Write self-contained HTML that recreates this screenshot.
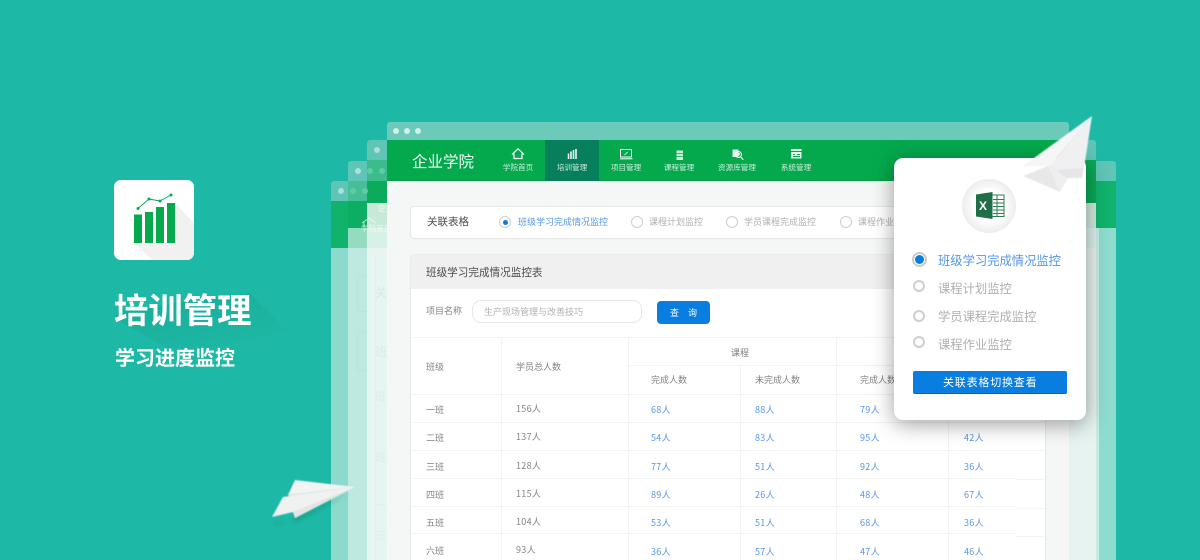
<!DOCTYPE html>
<html lang="zh-CN">
<head>
<meta charset="utf-8">
<title>培训管理</title>
<style>
html,body{margin:0;padding:0}
body{width:1200px;height:560px;overflow:hidden;background:#1eb9a6;position:relative;font-family:"Liberation Sans","Noto Sans CJK SC",sans-serif}
body,.t{font-family:"Noto Sans CJK SC","Liberation Sans",sans-serif}
.r{position:absolute}
.t{position:absolute;white-space:nowrap;line-height:12px;font-size:9px;color:#828282}
.b{color:#5596e6;letter-spacing:.3px}
.g{letter-spacing:.3px}
.nav{color:#cfeedb;font-size:7.6px;transform:translateX(-50%);top:162px}
#main{position:absolute;left:0;top:0;width:1200px;height:560px;filter:blur(.35px)}
.line{position:absolute;background:#f2f3f3;height:1px}
.vl{position:absolute;background:#f2f3f3;width:1px}
.rad{position:absolute;box-sizing:border-box;border-radius:50%;background:#fff}
</style>
</head>
<body>

<!-- left colored columns of the stacked windows -->
<div class="r" style="left:331px;top:181px;width:17px;height:20px;background:#5fc5b6;border-radius:3px 0 0 0"></div>
<div class="r" style="left:331px;top:201px;width:17px;height:47px;background:#10b26c"></div>
<div class="r" style="left:331px;top:248px;width:17px;height:312px;background:#8bdacd"></div>

<div class="r" style="left:348px;top:161px;width:19px;height:20px;background:#5fc5b6;border-radius:3px 0 0 0"></div>
<div class="r" style="left:348px;top:181px;width:19px;height:20px;background:#45bf98"></div>
<div class="r" style="left:348px;top:201px;width:19px;height:27px;background:#0bae62"></div>
<div class="r" style="left:348px;top:228px;width:19px;height:20px;background:#93dcc2"></div>
<div class="r" style="left:348px;top:248px;width:19px;height:312px;background:#bde9e1"></div>

<div class="r" style="left:367px;top:140px;width:20px;height:20px;background:#5fc5b6;border-radius:3px 0 0 0"></div>
<div class="r" style="left:367px;top:160px;width:20px;height:21px;background:#3cbb8d"></div>
<div class="r" style="left:367px;top:181px;width:20px;height:22px;background:#0aac5b"></div>
<div class="r" style="left:367px;top:203px;width:20px;height:25px;background:#c8e9d8"></div>
<div class="r" style="left:367px;top:228px;width:20px;height:20px;background:#d7f0e8"></div>
<div class="r" style="left:367px;top:248px;width:20px;height:312px;background:#e6f5f2"></div>

<svg class="r" style="left:331px;top:140px" width="56" height="70">
<g fill="#a8e2d8"><circle cx="10" cy="51" r="3"/><circle cx="27" cy="31" r="3"/><circle cx="46" cy="10" r="3"/></g>
<g fill="#5fcba5"><circle cx="22" cy="51" r="3"/><circle cx="34" cy="51" r="3"/><circle cx="39" cy="31" r="3"/><circle cx="51" cy="31" r="3"/></g>
</svg>
<svg class="r" style="left:360px;top:216px" width="24" height="14" fill="none" stroke="#fff" stroke-width="1" opacity=".7"><path d="M2 7L9 2L16 7M4 6V11"/></svg>
<div class="t" style="left:378px;top:203px;color:#fff;font-size:8px;opacity:.8">企业</div>
<div class="t" style="left:361px;top:223px;color:#fff;font-size:7.6px;opacity:.7">学院首页</div>
<div class="t" style="left:375px;top:287px;font-size:12px;color:#dce6e3">关联</div>
<div class="t" style="left:375px;top:346px;font-size:12px;color:#dfe8e5">班级</div>
<div class="t" style="left:375px;top:390px;font-size:11px;color:#e1eae7">班</div>
<div class="t" style="left:375px;top:451px;font-size:11px;color:#e1eae7">班</div>
<div class="t" style="left:375px;top:499px;font-size:11px;color:#e1eae7">一</div>
<div class="t" style="left:375px;top:529px;font-size:11px;color:#e1eae7">三</div>
<div class="r" style="left:357px;top:275px;width:10px;height:37px;border:1px solid #b6e5dc;border-right:0;box-sizing:border-box"></div>
<div class="r" style="left:357px;top:331px;width:10px;height:40px;border:1px solid #b6e5dc;border-right:0;box-sizing:border-box"></div>
<div class="r" style="left:375px;top:255px;width:12px;height:305px;border-left:1px solid #e1f1ed;box-sizing:border-box"></div>

<!-- right colored columns -->
<div class="r" style="left:1069px;top:140px;width:27px;height:20px;background:#5fc5b6;border-radius:0 3px 0 0"></div>
<div class="r" style="left:1069px;top:160px;width:27px;height:43px;background:#0aa856"></div>
<div class="r" style="left:1069px;top:203px;width:27px;height:25px;background:#cfe9dd"></div>
<div class="r" style="left:1069px;top:228px;width:27px;height:20px;background:#dcf0eb"></div>
<div class="r" style="left:1069px;top:248px;width:27px;height:312px;background:#e6f3f1"></div>
<div class="r" style="left:1096px;top:161px;width:20px;height:20px;background:#5fc5b6;border-radius:0 3px 0 0"></div>
<div class="r" style="left:1096px;top:181px;width:20px;height:47px;background:#10b26c"></div>
<div class="r" style="left:1096px;top:228px;width:20px;height:332px;background:#8fdbce"></div>
<div class="r" style="left:1096px;top:228px;width:3px;height:332px;background:#c5ebe3"></div>

<!-- main window -->
<div id="main">
<div class="r" style="left:387px;top:122px;width:682px;height:18px;background:#6bcaba;border-radius:3px 3px 0 0"></div>
<svg class="r" style="left:387px;top:122px" width="50" height="18"><g fill="#d2efe9"><circle cx="9" cy="9" r="3"/><circle cx="20" cy="9" r="3"/><circle cx="31" cy="9" r="3"/></g></svg>
<div class="r" style="left:387px;top:140px;width:682px;height:41px;background:#04a94d;border-bottom:1px solid #03a04a;box-sizing:border-box"></div>
<div class="r" style="left:545px;top:140px;width:54px;height:41px;background:#077f5d"></div>
<div class="r" style="left:387px;top:181px;width:682px;height:379px;background:#f5f7f7"></div>

<div class="t" style="left:412px;top:150px;font-size:15.5px;line-height:22px;color:#f4fbf6">企业学院</div>

<!-- nav icons -->
<svg class="r" style="left:500px;top:142px" width="320" height="22" fill="none" stroke="#fff" stroke-width="1.2">
<path d="M12 12.500 L18 6.800 L24 12.500 M14 11.500 V16.500 H22 V11.500"/>
<path d="M68.500 17V11.500M71 17V9.500M73.500 17V8M76 17V7" stroke-width="1.500"/>
<path d="M120.500 7.500h11v7.500h-11z" stroke-width="1"/><path d="M120 16.800h12.500" stroke-width="1"/>
<path d="M124.500 13l3-3" stroke-width=".8"/>
<path d="M176.500 8.500h6.500v9.500h-6.500z" fill="#cfeeda" stroke="none"/>
<path d="M176.500 11.500h6.500M176.500 14.500h6.500" stroke="#04a94d" stroke-width=".8"/>
<path d="M232.500 7.500h6v2.500l2 2-2.500 3h-5.500z" fill="#dff3e6" stroke="none"/>
<circle cx="238.500" cy="12.500" r="3" stroke-width=".9"/>
<path d="M240.800 15l2.500 2.800" stroke-width="1"/>
<path d="M291 7h10.500v9.500h-10.500z" fill="#e8f6ec" stroke="none"/>
<path d="M291 9.500h10.500M293 12.500h2M297 12.500h3M293 14.500h7" stroke="#04a94d" stroke-width=".9"/>
</svg>
<div class="t nav" style="left:518px">学院首页</div>
<div class="t nav" style="left:572px">培训管理</div>
<div class="t nav" style="left:626px">项目管理</div>
<div class="t nav" style="left:679px">课程管理</div>
<div class="t nav" style="left:737px">资源库管理</div>
<div class="t nav" style="left:796px">系统管理</div>

<!-- relation box -->
<div class="r" style="left:410px;top:206px;width:636px;height:33px;background:#fff;border:1px solid #e6e8e8;border-radius:4px;box-sizing:border-box"></div>
<div class="t" style="left:427px;top:216px;font-size:10.500px;color:#4c4c4c">关联表格</div>
<div class="rad" style="left:499px;top:216px;width:12px;height:12px;border:1px solid #cfcfcf"></div>
<div class="r" style="left:502.500px;top:219.500px;width:5px;height:5px;border-radius:50%;background:#0a7de0"></div>
<div class="t b" style="left:518px;top:216px;letter-spacing:0">班级学习完成情况监控</div>
<div class="rad" style="left:631px;top:216px;width:12px;height:12px;border:1px solid #cfcfcf"></div>
<div class="t" style="left:649px;top:216px;color:#b0b0b0">课程计划监控</div>
<div class="rad" style="left:726px;top:216px;width:12px;height:12px;border:1px solid #cfcfcf"></div>
<div class="t" style="left:744px;top:216px;color:#b0b0b0">学员课程完成监控</div>
<div class="rad" style="left:840px;top:216px;width:12px;height:12px;border:1px solid #cfcfcf"></div>
<div class="t" style="left:858px;top:216px;color:#b0b0b0">课程作业监控</div>

<!-- table card -->
<div class="r" style="left:410px;top:254px;width:636px;height:306px;background:#fff;border:1px solid #e9ebeb;border-bottom:0;border-radius:4px 4px 0 0;box-sizing:border-box"></div>
<div class="r" style="left:411px;top:255px;width:634px;height:34px;background:#f0f0f0;border-radius:3px 3px 0 0"></div>
<div class="t" style="left:426px;top:267px;font-size:10.600px;color:#4c4c4c">班级学习完成情况监控表</div>
<div class="t" style="left:426px;top:305px">项目名称</div>
<div class="r" style="left:472px;top:300px;width:170px;height:23px;border:1px solid #e6e8e8;border-radius:9px;box-sizing:border-box;background:#fff"></div>
<div class="t" style="left:484px;top:306px;color:#b0b0b0">生产现场管理与改善技巧</div>
<div class="r" style="left:657px;top:301px;width:53px;height:23px;border-radius:4px;background:#0a7de0"></div>
<div class="t" style="left:670px;top:307px;color:#fff;word-spacing:7px">查 询</div>

<div class="line" style="left:411px;top:337px;width:634px"></div>
<div class="line" style="left:628px;top:365px;width:417px"></div>
<div class="line" style="left:411px;top:394px;width:634px"></div>
<div class="line" style="left:411px;top:422px;width:634px"></div>
<div class="line" style="left:411px;top:450px;width:634px"></div>
<div class="line" style="left:411px;top:478px;width:605px"></div>
<div class="line" style="left:1016px;top:479px;width:29px"></div>
<div class="line" style="left:411px;top:506px;width:605px"></div>
<div class="line" style="left:1016px;top:508px;width:29px"></div>
<div class="line" style="left:411px;top:533px;width:605px"></div>
<div class="line" style="left:1016px;top:536px;width:29px"></div>
<div class="vl" style="left:501px;top:337px;height:223px"></div>
<div class="vl" style="left:628px;top:337px;height:223px"></div>
<div class="vl" style="left:740px;top:365px;height:195px"></div>
<div class="vl" style="left:836px;top:337px;height:223px"></div>
<div class="vl" style="left:948px;top:365px;height:195px"></div>

<div class="t" style="left:731px;top:347px">课程</div>
<div class="t" style="left:426px;top:361px">班级</div>
<div class="t" style="left:516px;top:361px">学员总人数</div>
<div class="t" style="left:651px;top:374px">完成人数</div>
<div class="t" style="left:755px;top:374px">未完成人数</div>
<div class="t" style="left:860px;top:374px">完成人数</div>

<div class="t" style="left:426px;top:404px">一班</div><div class="t g" style="left:516px;top:403px">156人</div><div class="t b" style="left:651px;top:404px">68人</div><div class="t b" style="left:755px;top:404px">88人</div><div class="t b" style="left:860px;top:404px">79人</div>
<div class="t" style="left:426px;top:432px">二班</div><div class="t g" style="left:516px;top:431px">137人</div><div class="t b" style="left:651px;top:432px">54人</div><div class="t b" style="left:755px;top:432px">83人</div><div class="t b" style="left:860px;top:432px">95人</div><div class="t b" style="left:964px;top:432px">42人</div>
<div class="t" style="left:426px;top:461px">三班</div><div class="t g" style="left:516px;top:460px">128人</div><div class="t b" style="left:651px;top:461px">77人</div><div class="t b" style="left:755px;top:461px">51人</div><div class="t b" style="left:860px;top:461px">92人</div><div class="t b" style="left:964px;top:461px">36人</div>
<div class="t" style="left:426px;top:489px">四班</div><div class="t g" style="left:516px;top:488px">115人</div><div class="t b" style="left:651px;top:489px">89人</div><div class="t b" style="left:755px;top:489px">26人</div><div class="t b" style="left:860px;top:489px">48人</div><div class="t b" style="left:964px;top:489px">67人</div>
<div class="t" style="left:426px;top:517px">五班</div><div class="t g" style="left:516px;top:516px">104人</div><div class="t b" style="left:651px;top:517px">53人</div><div class="t b" style="left:755px;top:517px">51人</div><div class="t b" style="left:860px;top:517px">68人</div><div class="t b" style="left:964px;top:517px">36人</div>
<div class="t" style="left:426px;top:545px">六班</div><div class="t g" style="left:516px;top:544px">93人</div><div class="t b" style="left:651px;top:546px">36人</div><div class="t b" style="left:755px;top:546px">57人</div><div class="t b" style="left:860px;top:546px">47人</div><div class="t b" style="left:964px;top:546px">46人</div>
</div>

<!-- popup -->
<div class="r" style="left:894px;top:158px;width:192px;height:262px;background:#fff;border-radius:9px;box-shadow:0 4px 22px rgba(0,0,0,.38)"></div>
<div class="r" style="left:962px;top:179px;width:54px;height:54px;border-radius:50%;background:radial-gradient(circle at 50% 50%,#fff 40%,#ececec 72%,#d6d6d6 100%)"></div>
<svg class="r" style="left:970px;top:188px" width="38" height="36">
<path d="M22 7h12v21.500h-12z" fill="#fff" stroke="#2f7d52" stroke-width="1"/>
<path d="M23 11.500h10.500M23 15h10.500M23 18.500h10.500M23 22h10.500M23 25.500h10.500M27 7.500v21" stroke="#2f7d52" stroke-width="1" fill="none"/>
<path d="M6 6.500L22.500 4v27L6 28.500z" fill="#1e6f47"/>
</svg>
<div class="t" style="left:979px;top:200px;color:#fff;font:bold 12px/12px 'Liberation Sans',sans-serif">X</div>

<div class="rad" style="left:911.500px;top:252px;width:15px;height:15px;border:2.500px solid #c9c9c9"></div>
<div class="r" style="left:914.500px;top:255px;width:9px;height:9px;border-radius:50%;background:#0a7de0"></div>
<div class="t" style="left:938px;top:254px;font-size:12.300px;color:#5596e6">班级学习完成情况监控</div>
<div class="rad" style="left:913px;top:280px;width:12px;height:12px;border:2.500px solid #cfcfcf"></div>
<div class="t" style="left:938px;top:282px;font-size:12.300px;color:#b0b0b0">课程计划监控</div>
<div class="rad" style="left:913px;top:310px;width:12px;height:12px;border:2.500px solid #cfcfcf"></div>
<div class="t" style="left:938px;top:310px;font-size:12.300px;color:#b0b0b0">学员课程完成监控</div>
<div class="rad" style="left:913px;top:336px;width:12px;height:12px;border:2.500px solid #cfcfcf"></div>
<div class="t" style="left:938px;top:338px;font-size:12.300px;color:#b0b0b0">课程作业监控</div>
<div class="r" style="left:913px;top:371px;width:154px;height:23px;background:#0a7de0;border-bottom:1px solid #0868b8;border-radius:2px;box-sizing:border-box"></div>
<div class="t" style="left:943px;top:376px;color:#fff;font-size:11px;letter-spacing:.8px">关联表格切换查看</div>

<!-- top-right plane -->
<svg class="r" style="left:1010px;top:105px" width="95" height="100">
<defs><filter id="bl"><feGaussianBlur stdDeviation=".4"/></filter></defs>
<g filter="url(#bl)">
<polygon points="13,71 38,61 58,63 50,87" fill="#e8e8e8"/>
<polygon points="38,61 50,87 58,73 52,60" fill="#efefef"/>
<polygon points="40,61 74,63 72,73 57,73" fill="#e6e6e6"/>
<polygon points="82,11 13,61 40,61" fill="#f6f6f7"/>
<polygon points="82,11 40,61 46,65 74,63" fill="#f0f0f2"/>
</g>
</svg>

<!-- left icon -->
<div class="r" style="left:114px;top:180px;width:80px;height:80px;background:#fff;border-radius:7px;overflow:hidden">
<svg width="80" height="80">
<polygon points="61,23 80,43 80,80 38,80 20,63 61,63" fill="#f1f1f1"/>
<g fill="#07a94f"><rect x="20" y="34.500" width="8" height="28.500"/><rect x="31" y="32" width="8" height="31"/><rect x="42" y="27" width="8" height="36"/><rect x="53" y="23" width="8" height="40"/></g>
<polyline points="24,28.500 35,19 46,21 57,15" fill="none" stroke="#07a94f" stroke-width=".9"/>
<g fill="#07a94f"><circle cx="24" cy="28.500" r="1.500"/><circle cx="35" cy="19" r="1.500"/><circle cx="46" cy="21" r="1.500"/><circle cx="57" cy="15" r="1.500"/></g>
</svg>
</div>

<!-- title long shadow -->
<svg class="r" style="left:100px;top:280px" width="200" height="90">
<defs><linearGradient id="sh" x1="0.200" y1="0.100" x2="0.800" y2="1"><stop offset="0" stop-color="#16a492" stop-opacity=".55"/><stop offset="1" stop-color="#16a492" stop-opacity="0"/></linearGradient></defs>
<polygon points="150,13 188,52 80,75 14,38 20,30" fill="url(#sh)"/>
</svg>
<div class="t" style="left:114px;top:285px;font-size:34.400px;line-height:46px;font-weight:700;color:#fff">培训管理</div>
<div class="t" style="left:115px;top:343px;font-size:20px;line-height:28px;font-weight:700;color:#fff">学习进度监控</div>

<!-- bottom-left plane -->
<svg class="r" style="left:260px;top:470px" width="110" height="70">
<defs>
<filter id="bs"><feGaussianBlur stdDeviation="2.500"/></filter>
<filter id="bl2"><feGaussianBlur stdDeviation=".4"/></filter>
</defs>
<polygon points="92,22 36,46 32,52 14,52 12,54 36,52" fill="#0c6f62" opacity=".35" filter="url(#bs)"/>
<g filter="url(#bl2)">
<polygon points="95,17 35,10 28,25" fill="#f3f3f3"/>
<polygon points="95,17 28,25 34,33" fill="#e6e6e6"/>
<polygon points="95,17 23,27 12,47 33,42 35,48" fill="#f1f1f1"/>
<polygon points="95,17 33,42 35,48" fill="#e4e4e4"/>
</g>
</svg>

</body>
</html>
